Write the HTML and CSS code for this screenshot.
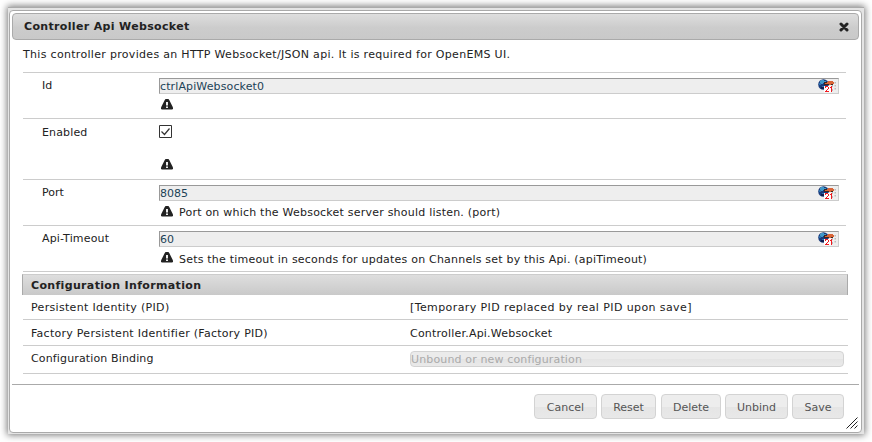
FILE: index.html
```html
<!DOCTYPE html>
<html lang="en">
<head>
<meta charset="utf-8">
<title>Controller Api Websocket</title>
<link rel="stylesheet" href="styles.css">
</head>
<body>
<svg class="defs" width="0" height="0" aria-hidden="true">
  <symbol id="alert" viewBox="0 0 12 11"><path fill="#222" d="M4.500 0h3l1 1.500L12 8.500V10l-1 .5H1L0 10V8.500L3.500 1.500z"/><path fill="#eee" d="M5 3h2v3.500H5zm0 4.500h2V9H5z"/></symbol>
  <symbol id="picker" viewBox="0 0 18 14">
    <circle cx="5.500" cy="5.500" r="5.300" fill="#193b7d"/><path fill="#3f97c8" d="M3 1h3v1h2v2H5v1H3V4H2V2h1z"/><path fill="#2870ae" d="M1 4h2v2H1zm3 3h2v1H4z"/><path fill="#101e50" d="M3 8h3v2H3z"/>
    <path fill="#3a2520" d="M6 3h5v1h4v2H6z"/><path fill="#d86437" d="M9 3h1V2h5v1h1v2h-3v1h-2V5H7V4h2z"/>
    <path fill="#fff" d="M6 7h7v6.500H6z"/>
    <path fill="#f01c20" shape-rendering="crispEdges" d="M7 7h3v1H7zM10 8h1v2h-1zM9 10h1v1H9zM8 11h1v1H8zM7 12h4v1H7zM7 8h1v1H7zM13 7h1v6h-1zM12 8h1v1h-1z"/>
    <path fill="#bbb" d="M14 6h1v2h-1zm0 4h1v2h-1zm2.500-7H18v1.500h-1.500zm0 3H18v1.500h-1.500zm0 3H18v1.500h-1.500z"/>
  </symbol>
</svg>
<main class="window">
  <section class="dialog">
    <header class="title"><span class="title-text">Controller Api Websocket</span>
      <svg class="close" width="10" height="10" viewBox="0 0 10 10"><path d="M2 2l6 6M8 2L2 8" fill="none" stroke="#222" stroke-width="3" stroke-linecap="round"/></svg>
    </header>
    <div class="content">
      <p class="description"><span class="t-desc">This controller provides an HTTP Websocket/JSON api. It is required for OpenEMS UI.</span></p>
      <div class="field"><label>Id</label><div class="value"><div class="input"><span class="t-ws">ctrlApiWebsocket0</span><svg width="18" height="14"><use href="#picker"/></svg></div><div class="hint"><svg width="12" height="11"><use href="#alert"/></svg></div></div></div>
      <div class="field enabled"><label class="t-enabled">Enabled</label><div class="value"><svg class="check" width="13" height="13" viewBox="0 0 13 13"><path d="M.5.5h12v12H.5z" fill="#fff" stroke="#333"/><path d="M2.500 6.500l3 3 5-6" fill="none" stroke="#333" stroke-width="1.200"/></svg><div class="hint"><svg width="12" height="11"><use href="#alert"/></svg></div></div></div>
      <div class="field"><label>Port</label><div class="value"><div class="input"><span>8085</span><svg width="18" height="14"><use href="#picker"/></svg></div><div class="hint"><svg width="12" height="11"><use href="#alert"/></svg><span class="t-listen">Port on which the Websocket server should listen. (port)</span></div></div></div>
      <div class="field timeout"><label class="t-api">Api-Timeout</label><div class="value"><div class="input"><span>60</span><svg width="18" height="14"><use href="#picker"/></svg></div><div class="hint"><svg width="12" height="11"><use href="#alert"/></svg><span class="t-timeout">Sets the timeout in seconds for updates on Channels set by this Api. (apiTimeout)</span></div></div></div>
      <h2 class="info-head"><span class="t-info">Configuration Information</span></h2>
      <div class="info"><span class="t-pid">Persistent Identity (PID)</span><span class="t-temp">[Temporary PID replaced by real PID upon save]</span></div>
      <div class="info"><span class="t-factory">Factory Persistent Identifier (Factory PID)</span><span class="t-controller">Controller.Api.Websocket</span></div>
      <div class="info binding"><span class="t-binding">Configuration Binding</span><div class="select"><span class="t-unbound">Unbound or new configuration</span></div></div>
    </div>
    <footer class="actions"><button class="cancel">Cancel</button><button class="reset">Reset</button><button class="delete">Delete</button><button class="unbind">Unbind</button><button class="save">Save</button></footer>
    <svg class="resize" width="12" height="12" viewBox="0 0 12 12"><path d="M.5 11.500l11-11M4.500 11.500l7-7M8.500 11.500l3-3" fill="none" stroke="#222"/></svg>
  </section>
</main>
</body>
</html>
```
FILE: styles.css
```css
* { box-sizing: border-box; }
body { margin: 0; padding: 7px 8px 8px; height: 442px; overflow: hidden; background: #fff; color: #222; font: 11px/14px Verdana, "DejaVu Sans", sans-serif; font-variant-ligatures: none; }
svg { display: block; flex: none; }
.defs { position: absolute; }
.window { height: 427px; padding: 2px 2px 1px 1px; border-top: 1px solid #aaa; background: #e4e4e4; box-shadow: 0 0 7px 1px #777; }
.dialog { position: relative; height: 423px; padding: 2px; border: 1px solid #aaa; border-radius: 4px; background: #fff; }
.title { display: flex; align-items: center; justify-content: space-between; height: 27px; padding: 0 9px 0 11px; border: 1px solid #aaa; border-radius: 4px; background: linear-gradient(#dedede, #ccc 55%, #c9c9c9); font-weight: bold; }
.content { height: 344px; padding: 7px 12px 0 11px; }
.description { margin: 0; height: 25px; padding-top: 1px; }
.field { display: flex; width: 823px; height: 46px; border-top: 1px solid #ccc; padding-top: 5px; }
.field label { width: 136px; padding: 1px 0 0 19px; flex: none; }
.value { width: 680px; }
.input { display: flex; align-items: center; justify-content: space-between; height: 16px; padding: 0 2px 0 0; border: 1px solid #ccc; border-top-color: #999; border-left-color: #999; background: #eee; color: #1c4257; }
.input span { padding-top: 2px; }
.hint { display: flex; align-items: center; height: 14px; margin: 5px 0 0 2px; gap: 6px; }
.hint svg { margin-bottom: 3px; }
.enabled { height: 61px; }
.enabled label { padding-top: 2px; }
.check { margin-top: 1px; }
.enabled .hint { margin-top: 21px; }
.timeout { height: 47px; border-bottom: 1px solid #ccc; }
.timeout .hint { margin-top: 6px; }
.timeout .hint svg { margin-bottom: 5px; }
.info-head { display: flex; align-items: center; width: 826px; height: 21px; margin: 2px 0 0 -1px; padding: 1px 0 0 8px; border: 1px solid #aaa; border-top-color: #ccc; border-bottom: 0; background: linear-gradient(#dedede, #c9c9c9); font-size: 11px; }
.info { display: flex; align-items: center; width: 825px; height: 25px; padding: 1px 4px 0 8px; border-bottom: 1px solid #ccc; }
.info + .info { height: 26px; padding-top: 2px; }
.info > :first-child { width: 379px; flex: none; }
.info + .info.binding { height: 28px; align-items: flex-start; padding-top: 5px; }
.binding > :first-child { padding-top: 1px; }
.select { width: 434px; height: 16px; line-height: 16px; border: 1px solid #d3d3d3; border-radius: 4px; background: linear-gradient(#ebebeb 50%, #e4e4e4 50%, #eaeaea); color: #aaa; }
.actions { display: flex; height: 46px; padding: 9px 15px 0 0; border-top: 1px solid #aaa; justify-content: flex-end; }
button { height: 25px; margin: 0 0 0 4px; padding: 2px 0 0; border: 1px solid #d3d3d3; border-radius: 4px; background: linear-gradient(#ededed 50%, #e5e5e5 50%, #e8e8e8); color: #555; font: inherit; }
.cancel { width: 63px; }
.reset { width: 55px; }
.delete { width: 60px; margin-left: 5px; }
.unbind { width: 63px; }
.save { width: 52px; }
.resize { position: absolute; right: 3px; bottom: 3px; }

.title-text { letter-spacing: .34px; }
.t-desc { letter-spacing: .31px; }
.t-ws { letter-spacing: .12px; }
.t-enabled, .t-api { letter-spacing: .15px; }
.t-listen { letter-spacing: .22px; }
.t-timeout { letter-spacing: .21px; }
.t-info { letter-spacing: .34px; }
.t-pid { letter-spacing: .32px; }
.t-temp { letter-spacing: .4px; }
.t-factory { letter-spacing: .27px; }
.t-controller { letter-spacing: .21px; }
.t-binding, .t-unbound { letter-spacing: .14px; }
```
